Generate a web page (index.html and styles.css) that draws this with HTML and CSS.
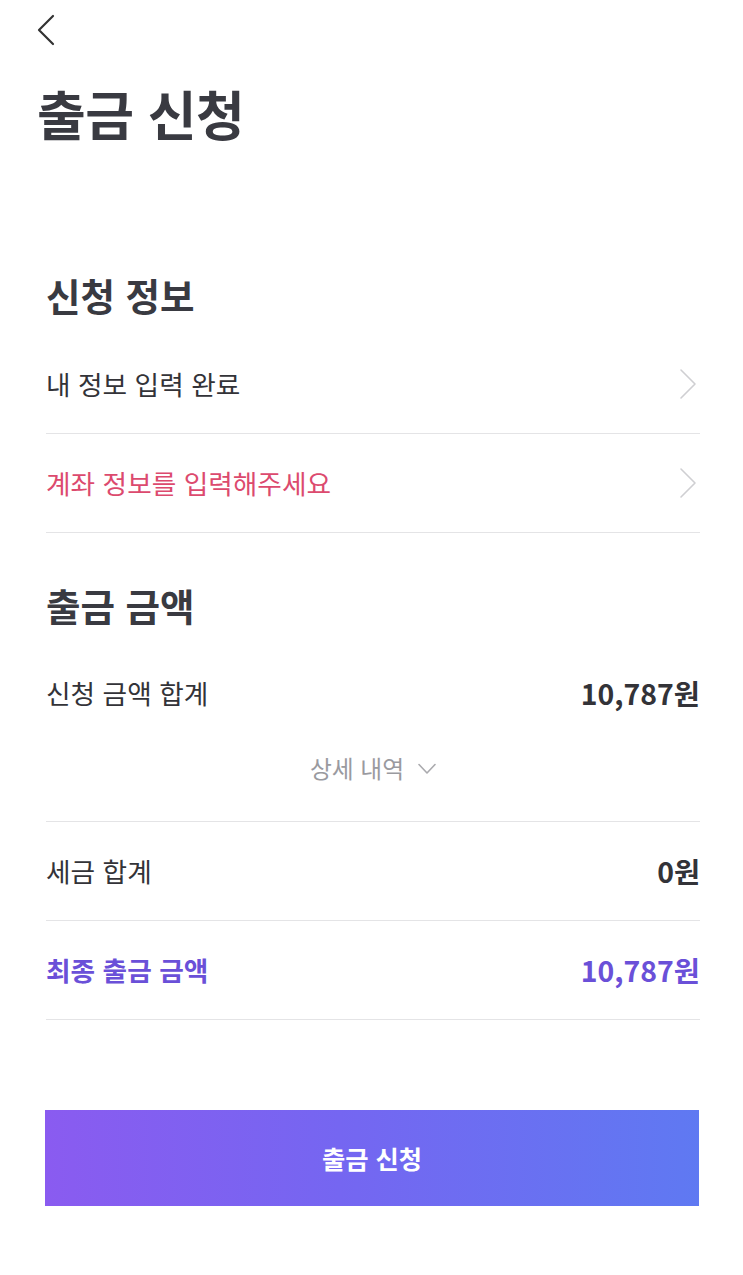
FILE: index.html
```html
<!DOCTYPE html>
<html lang="ko">
<head>
<meta charset="UTF-8" />
<meta name="viewport" content="width=device-width, initial-scale=1" />
<title>출금 신청</title>
<link rel="stylesheet" href="styles.css">
</head>
<body>

<div class="page">
  <header class="topbar">
    <button class="back" aria-label="뒤로">
      <svg width="20" height="32" viewBox="0 0 20 32" fill="none" stroke="#333" stroke-width="2.2" stroke-linecap="round" stroke-linejoin="round">
        <path d="M17 2 L3 16 L17 30" />
      </svg>
    </button>
  </header>

  <h1 class="title">출금 신청</h1>

  <section class="section info">
    <h2 class="section-title">신청 정보</h2>
    <a class="row link" href="#">
      <span>내 정보 입력 완료</span>
      <svg class="chev" width="20" height="32" viewBox="0 0 20 32" fill="none" stroke="#cfcfd2" stroke-width="1.6" stroke-linecap="round" stroke-linejoin="round">
        <path d="M3 2 L17 16 L3 30" />
      </svg>
    </a>
    <a class="row link warn" href="#">
      <span>계좌 정보를 입력해주세요</span>
      <svg class="chev" width="20" height="32" viewBox="0 0 20 32" fill="none" stroke="#cfcfd2" stroke-width="1.6" stroke-linecap="round" stroke-linejoin="round">
        <path d="M3 2 L17 16 L3 30" />
      </svg>
    </a>
  </section>

  <section class="section amount">
    <h2 class="section-title">출금 금액</h2>
    <div class="total">
      <div class="row plain">
        <span>신청 금액 합계</span>
        <strong class="value">10,787원</strong>
      </div>
      <button class="detail">
        상세 내역
        <svg width="18" height="12" viewBox="0 0 18 12" fill="none" stroke="#aaaaae" stroke-width="1.6" stroke-linecap="round" stroke-linejoin="round">
          <path d="M1 1.5 L9 10 L17 1.5" />
        </svg>
      </button>
    </div>
    <div class="row">
      <span>세금 합계</span>
      <strong class="value">0원</strong>
    </div>
    <div class="row final">
      <span>최종 출금 금액</span>
      <strong class="value">10,787원</strong>
    </div>
  </section>

  <button class="submit">출금 신청</button>
</div>

</body>
</html>
```

FILE: styles.css
```css
/* Reset & base */
body, html {
  margin: 0;
  padding: 0;
  background: #fff;
  font-family: "Noto Sans CJK KR", "Noto Sans", sans-serif;
  color: #333338;
}

button {
  font-family: inherit;
  border: 0;
  background: none;
  padding: 0;
  cursor: pointer;
}

a {
  color: inherit;
  text-decoration: none;
}

.page {
  padding: 0 43px 0 46px;
}

/* Top bar */
.topbar {
  height: 60px;
  display: flex;
  align-items: flex-start;
  margin-left: -10px;
}
.back {
  padding-top: 14px;
}
.back svg {
  display: block;
}

/* Page title */
.title {
  margin: 23px 0 0 -9px;
  font-size: 53px;
  line-height: 60px;
  font-weight: 700;
  color: #393a41;
  letter-spacing: -0.5px;
}

/* Sections */
.section-title {
  margin: 0 0 18px 0;
  font-size: 37.5px;
  line-height: 44px;
  font-weight: 700;
  color: #393a41;
}
.info {
  margin-top: 130px;
}
.amount {
  margin-top: 50px;
}

/* Rows */
.row {
  display: flex;
  align-items: center;
  justify-content: space-between;
  height: 98px;
  border-bottom: 1px solid #e4e4e6;
  font-size: 26.7px;
  line-height: 30px;
}
.row.link .chev {
  display: block;
  margin-right: 2px;
}
.warn {
  color: #dc4a6e;
}

.value {
  font-weight: 700;
  font-size: 28.4px;
}

/* Total with detail toggle */
.total {
  border-bottom: 1px solid #e4e4e6;
  padding-bottom: 38px;
}
.row.plain {
  height: 60px;
  margin-top: 36px;
  border-bottom: 0;
}
.detail {
  display: flex;
  align-items: center;
  justify-content: center;
  gap: 14px;
  width: 100%;
  margin-top: 30px;
  font-size: 23.8px;
  line-height: 30px;
  color: #9a9a9f;
}
.detail svg {
  display: block;
  margin-top: 2px;
}

.final {
  color: #6a50d8;
  font-weight: 700;
}

/* Submit button */
.submit {
  display: block;
  width: 100%;
  height: 96px;
  margin: 90px 0 0 -1px;
  background: linear-gradient(90deg, #8a5bf0 0%, #7566f1 45%, #5f79f2 100%);
  color: #fff;
  font-size: 25.3px;
  font-weight: 700;
}
```
